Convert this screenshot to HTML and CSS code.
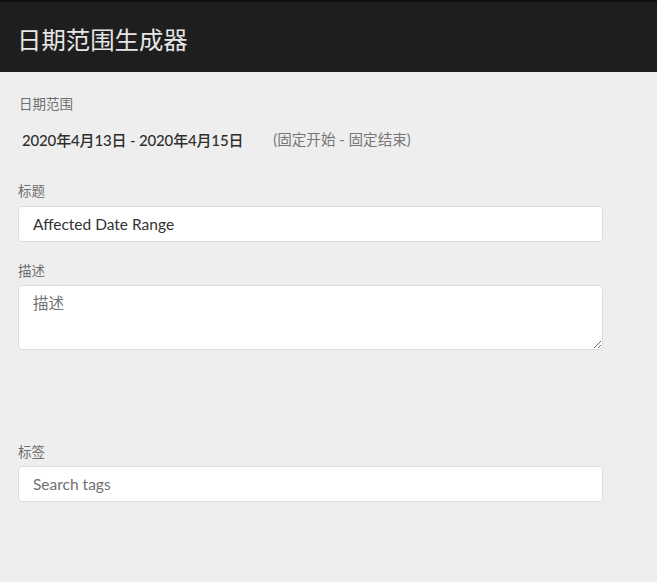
FILE: index.html
```html
<!DOCTYPE html>
<html lang="zh-CN">
<head>
<meta charset="utf-8">
<title>日期范围生成器</title>
<link rel="stylesheet" href="styles.css">
</head>
<body>
<header class="app-header">
  <h1 class="app-title">日期范围生成器</h1>
</header>
<main class="form">
  <section class="field field-range">
    <div class="field-label">日期范围</div>
    <div class="range-row">
      <span class="range-value">2020年4月13日 - 2020年4月15日</span>
      <span class="range-mode">(固定开始 - 固定结束)</span>
    </div>
  </section>
  <section class="field field-title">
    <label class="field-label" for="title">标题</label>
    <input class="text-input" id="title" type="text" value="Affected Date Range">
  </section>
  <section class="field field-desc">
    <label class="field-label" for="desc">描述</label>
    <textarea class="text-area" id="desc" placeholder="描述"></textarea>
  </section>
  <section class="field field-tags">
    <label class="field-label" for="tags">标签</label>
    <input class="text-input" id="tags" type="text" placeholder="Search tags">
  </section>
</main>
</body>
</html>
```
FILE: styles.css
```css
* { box-sizing: border-box; }
html, body {
  margin: 0;
  padding: 0;
  background: #eeeeee;
  font-family: Lato, "Noto Sans CJK SC", sans-serif;
  color: #333;
}
.app-header {
  height: 72px;
  background: #1e1e1e;
  border-top: 2px solid #0d0d12;
  display: flex;
  align-items: center;
  padding: 0 17px;
}
.app-title {
  margin: 0;
  font-family: "Noto Sans CJK SC", sans-serif;
  font-weight: 400;
  font-size: 24.4px;
  line-height: 30px;
  color: #e6e6e6;
  position: relative;
  top: 2px;
}
.form {
  padding: 22px 54px 0 18px;
  display: flex;
  flex-direction: column;
}
.field { display: flex; flex-direction: column; }
.field-label {
  display: block;
  font-family: "Noto Sans CJK SC", sans-serif;
  font-size: 13.5px;
  line-height: 18px;
  color: #6e6e6e;
}
.field-range .field-label { margin-left: 1px; }
.range-row {
  margin-top: 18px;
  display: flex;
  align-items: center;
  padding-left: 4px;
  font-size: 15px;
  line-height: 20px;
}
.range-value { color: #2e2e2e; font-weight: 500; letter-spacing: -0.16px; }
.range-mode { margin-left: 30px; color: #777; font-size: 14.6px; }
.field-title { margin-top: 31px; }
.field-title .field-label { margin-bottom: 7px; }
.field-desc { margin-top: 19px; }
.field-desc .field-label { margin-bottom: 6px; }
.field-tags { margin-top: 92px; }
.field-tags .field-label { margin-bottom: 6px; }
.text-input, .text-area {
  width: 100%;
  margin: 0;
  background: #fff;
  border: 1px solid #dcdcdc;
  border-radius: 4px;
  font-family: Lato, "Noto Sans CJK SC", sans-serif;
  font-size: 15.5px;
  color: #333;
  outline: none;
}
.text-input {
  height: 36px;
  padding: 0 14px;
}
.text-area {
  height: 65px;
  padding: 7px 14px;
  resize: vertical;
  line-height: 20px;
  display: block;
}
.text-input::placeholder, .text-area::placeholder { color: #707070; opacity: 1; }
```
